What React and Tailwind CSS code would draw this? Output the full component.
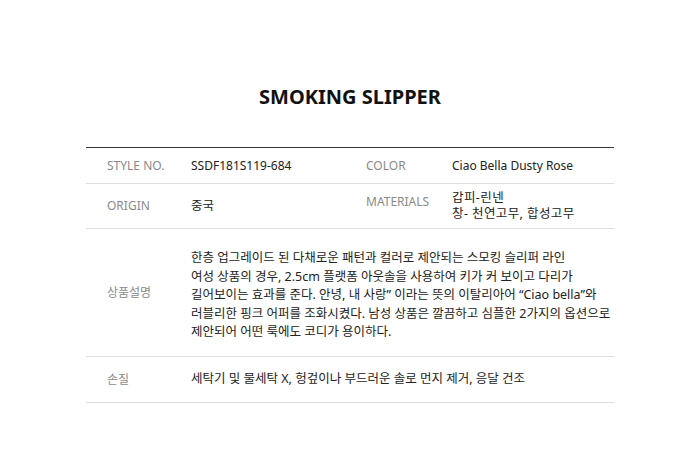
export default function App() {
  const font = { fontFamily: '"Noto Sans", "Noto Sans CJK KR", sans-serif' };
  return (
    <div className="w-[700px] h-[470px] bg-white" style={font}>
      <div className="pt-[83px] text-center">
        <h1 className="text-[20px] font-bold leading-[28px] text-[#111]">SMOKING SLIPPER</h1>
      </div>
      <div className="mx-auto mt-[36px] w-[528px] border-t border-[#333] text-[12px]">
        <div className="grid grid-cols-[105px_175px_86px_1fr] h-[36px] items-center border-b border-[#ddd]">
          <div className="pl-[21px] text-[#8a8a8a]">STYLE NO.</div>
          <div className="text-[#222]">SSDF181S119-684</div>
          <div className="text-[#8a8a8a]">COLOR</div>
          <div className="text-[#222]">Ciao Bella Dusty Rose</div>
        </div>
        <div className="grid grid-cols-[105px_175px_86px_1fr] h-[45px] items-center border-b border-[#ddd]">
          <div className="pl-[21px] text-[#8a8a8a]">ORIGIN</div>
          <div className="text-[#222] text-[12.5px]">중국</div>
          <div className="text-[#8a8a8a] self-start pt-[9px]">MATERIALS</div>
          <div className="text-[#222] text-[12.5px] leading-[16px] tracking-[0.4px] word-spacing-[2px]">
            <div>갑피-린넨</div>
            <div>창- 천연고무, 합성고무</div>
          </div>
        </div>
        <div className="grid grid-cols-[105px_1fr] h-[128px] items-center border-b border-[#ddd]">
          <div className="pl-[21px] text-[#8a8a8a]">상품설명</div>
          <div className="text-[#222] text-[12.5px] leading-[18.5px] pt-[6px]">
            한층 업그레이드 된 다채로운 패턴과 컬러로 제안되는 스모킹 슬리퍼 라인<br />
            여성 상품의 경우, 2.5cm 플랫폼 아웃솔을 사용하여 키가 커 보이고 다리가<br />
            길어보이는 효과를 준다. 안녕, 내 사랑” 이라는 뜻의 이탈리아어 “Ciao bella”와<br />
            러블리한 핑크 어퍼를 조화시켰다. 남성 상품은 깔끔하고 심플한 2가지의 옵션으로<br />
            제안되어 어떤 룩에도 코디가 용이하다.
          </div>
        </div>
        <div className="grid grid-cols-[105px_1fr] h-[46px] items-center border-b border-[#ddd]">
          <div className="pl-[21px] text-[#8a8a8a]">손질</div>
          <div className="text-[#222] text-[12.5px]">세탁기 및 물세탁 X, 헝겊이나 부드러운 솔로 먼지 제거, 응달 건조</div>
        </div>
      </div>
    </div>
  );
}
